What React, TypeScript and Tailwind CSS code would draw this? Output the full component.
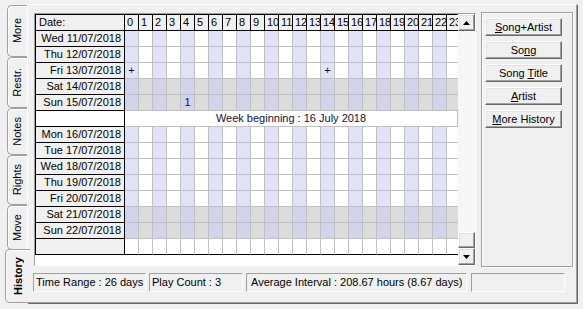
import React from 'react'

type Row = {
  kind: 'day' | 'week' | 'empty'
  label?: string
  weekend?: boolean
  marks?: Record<number, string>
}

const rows: Row[] = [
  { kind: 'day', label: 'Wed 11/07/2018' },
  { kind: 'day', label: 'Thu 12/07/2018' },
  { kind: 'day', label: 'Fri 13/07/2018', marks: { 0: '+', 14: '+' } },
  { kind: 'day', label: 'Sat 14/07/2018', weekend: true },
  { kind: 'day', label: 'Sun 15/07/2018', weekend: true, marks: { 4: '1' } },
  { kind: 'week', label: 'Week beginning : 16 July 2018' },
  { kind: 'day', label: 'Mon 16/07/2018' },
  { kind: 'day', label: 'Tue 17/07/2018' },
  { kind: 'day', label: 'Wed 18/07/2018' },
  { kind: 'day', label: 'Thu 19/07/2018' },
  { kind: 'day', label: 'Fri 20/07/2018' },
  { kind: 'day', label: 'Sat 21/07/2018', weekend: true },
  { kind: 'day', label: 'Sun 22/07/2018', weekend: true },
  { kind: 'empty' },
]

const hours = Array.from({ length: 24 }, (_, i) => i)

const tabs = [
  { label: 'More', h: 'h-[52px]' },
  { label: 'Restr.', h: 'h-[51px]' },
  { label: 'Notes', h: 'h-[47px]' },
  { label: 'Rights', h: 'h-[50px]' },
  { label: 'Move', h: 'h-[45px]' },
]

const raised =
  'bg-[#f0f0f0] border border-t-white border-l-white border-b-[#696969] border-r-[#696969] shadow-[inset_-1px_-1px_0_#a0a0a0,inset_1px_1px_0_#e3e3e3]'
const sunken = 'border border-t-[#a0a0a0] border-l-[#a0a0a0] border-b-white border-r-white'

const hourBg = (h: number, weekend?: boolean) => {
  if (weekend) return h % 2 === 0 ? 'bg-[#d3d3eb]' : 'bg-[#dcdcdc]'
  return h % 2 === 0 ? 'bg-[#e2e2f8]' : 'bg-white'
}

const Arrow: React.FC<{ up?: boolean }> = ({ up }) => (
  <svg width="7" height="4" viewBox="0 0 7 4">
    {up ? <polygon points="3.5,0 7,4 0,4" fill="#000" /> : <polygon points="0,0 7,0 3.5,4" fill="#000" />}
  </svg>
)

const HistoryGrid: React.FC = () => (
  <div className="w-[423px] overflow-hidden">
    <div className="w-[430px]">
      {/* header */}
      <div className="flex">
        <div className="w-[90px] shrink-0 h-[17px] border border-black bg-[#f0f0f0] pl-[3px] leading-[15px]">
          Date:
        </div>
        {hours.map((h) => (
          <div
            key={h}
            className="w-[14px] shrink-0 h-[17px] border-t border-b border-r border-black bg-[#f0f0f0] pl-[2px] leading-[15px] overflow-hidden whitespace-nowrap"
          >
            {h}
          </div>
        ))}
      </div>

      {rows.map((row, i) => {
        if (row.kind === 'week') {
          return (
            <div key={i} className="flex">
              <div className="w-[90px] shrink-0 h-[16px] border-l border-r border-b border-black bg-white" />
              <div className="w-[333px] shrink-0 h-[16px] border-r border-b border-[#c0c0c0] bg-white text-center leading-[15px] text-[#10103a]">
                {row.label}
              </div>
            </div>
          )
        }
        const empty = row.kind === 'empty'
        return (
          <div key={i} className="flex">
            <div className="w-[90px] shrink-0 h-[16px] border-l border-r border-b border-black bg-[#f0f0f0] pr-[3px] text-right leading-[15px] whitespace-nowrap">
              {row.label}
            </div>
            {hours.map((h) => (
              <div
                key={h}
                className={`w-[14px] shrink-0 h-[16px] border-r border-[#c0c0c0] ${
                  empty ? 'bg-white border-b border-b-black' : `${hourBg(h, row.weekend)} border-b`
                } text-center leading-[15px] text-[#10103a]`}
              >
                {row.marks?.[h]}
              </div>
            ))}
          </div>
        )
      })}
    </div>
  </div>
)

const ScrollBar: React.FC = () => (
  <div className="w-[17px] flex flex-col">
    <div className={`h-[17px] ${raised} flex items-center justify-center`}>
      <Arrow up />
    </div>
    <div className="flex-1 bg-[repeating-conic-gradient(#f0f0f0_0_25%,#ffffff_0_50%)] bg-[length:2px_2px]" />
    <div className={`h-[16px] ${raised}`} />
    <div className={`h-[17px] ${raised} flex items-center justify-center`}>
      <Arrow />
    </div>
  </div>
)

const buttons: React.ReactNode[] = [
  <>
    <u>S</u>ong+Artist
  </>,
  <>
    So<u>n</u>g
  </>,
  <>
    Song <u>T</u>itle
  </>,
  <>
    <u>A</u>rtist
  </>,
  <>
    <u>M</u>ore History
  </>,
]

export default function App() {
  return (
    <div className="w-[583px] h-[309px] bg-[#f0f0f0] flex font-['Liberation_Sans',Arial,sans-serif] text-[11px] text-black overflow-hidden select-none">
      {/* vertical tabs */}
      <div className="w-[27px] shrink-0 pt-[5px] flex flex-col items-end">
        {tabs.map((t) => (
          <div
            key={t.label}
            className={`w-[20px] ${t.h} shrink-0 bg-[#f0f0f0] border border-r-0 border-[#a0a0a0] rounded-l-[5px] shadow-[inset_1px_1px_0_#fff] flex items-center justify-center`}
          >
            <span className="[writing-mode:vertical-rl] rotate-180 leading-none">{t.label}</span>
          </div>
        ))}
        <div className="relative z-10 -mr-[3px] -mt-[1px] w-[25px] h-[54px] shrink-0 bg-[#f0f0f0] border border-r-0 border-[#a0a0a0] rounded-l-[5px] shadow-[inset_1px_1px_0_#fff] flex items-center justify-center">
          <span className="[writing-mode:vertical-rl] rotate-180 leading-none font-bold">History</span>
        </div>
      </div>

      {/* tab sheet */}
      <div className="mt-[4px] mb-[6px] mr-[6px] flex-1 border border-t-white border-l-white border-b-[#a0a0a0] border-r-[#a0a0a0] shadow-[1px_1px_0_#696969] flex flex-col">
        <div className="flex items-start pt-[7px] pl-[6px]">
          <div className={`mt-[1px] w-[442px] h-[253px] ${sunken} bg-white flex`}>
            <div className="w-[423px] h-full">
              <HistoryGrid />
            </div>
            <ScrollBar />
          </div>
          <div className="ml-[5px] w-[92px] h-[255px] border border-[#a0a0a0] shadow-[inset_1px_1px_0_#fff,1px_1px_0_#fff] pt-[5px] pl-[3px] flex flex-col gap-[5px]">
            {buttons.map((b, i) => (
              <div key={i} className={`w-[77px] h-[18px] ${raised} flex items-center justify-center leading-none`}>
                <span>{b}</span>
              </div>
            ))}
          </div>
        </div>

        {/* status bar */}
        <div className="flex mt-[6px] pl-[5px]">
          <div className={`w-[113px] h-[19px] ${sunken} pl-[2px] leading-[17px] whitespace-nowrap`}>Time Range : 26 days</div>
          <div className={`ml-[3px] w-[94px] h-[19px] ${sunken} pl-[2px] leading-[17px] whitespace-nowrap`}>Play Count : 3</div>
          <div className={`ml-[3px] w-[221px] h-[19px] ${sunken} pl-[4px] leading-[17px] whitespace-nowrap`}>
            Average Interval : 208.67 hours (8.67 days)
          </div>
          <div className={`ml-[4px] w-[94px] h-[19px] ${sunken}`} />
        </div>
      </div>
    </div>
  )
}
